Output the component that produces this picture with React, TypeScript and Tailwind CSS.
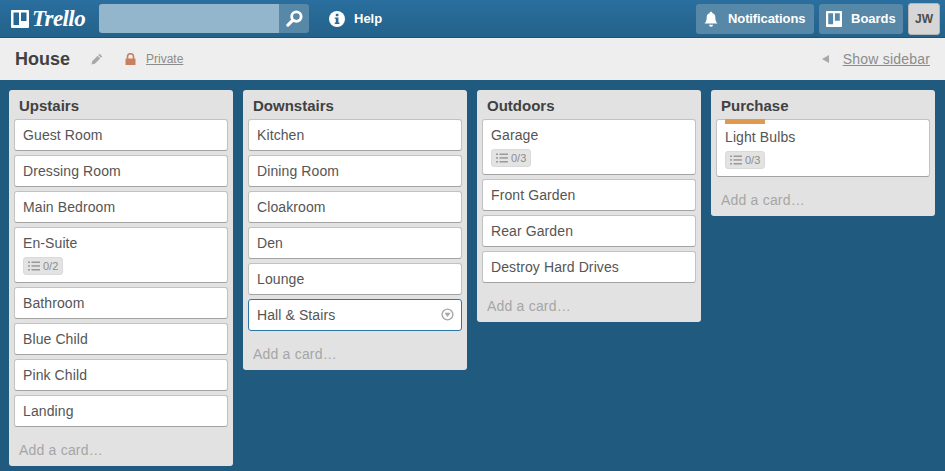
interface CardData {
  title: string;
  checklist?: string;
  label?: boolean;
  active?: boolean;
}

interface ListData {
  name: string;
  cards: CardData[];
}

const lists: ListData[] = [
  {
    name: 'Upstairs',
    cards: [
      { title: 'Guest Room' },
      { title: 'Dressing Room' },
      { title: 'Main Bedroom' },
      { title: 'En-Suite', checklist: '0/2' },
      { title: 'Bathroom' },
      { title: 'Blue Child' },
      { title: 'Pink Child' },
      { title: 'Landing' },
    ],
  },
  {
    name: 'Downstairs',
    cards: [
      { title: 'Kitchen' },
      { title: 'Dining Room' },
      { title: 'Cloakroom' },
      { title: 'Den' },
      { title: 'Lounge' },
      { title: 'Hall & Stairs', active: true },
    ],
  },
  {
    name: 'Outdoors',
    cards: [
      { title: 'Garage', checklist: '0/3' },
      { title: 'Front Garden' },
      { title: 'Rear Garden' },
      { title: 'Destroy Hard Drives' },
    ],
  },
  {
    name: 'Purchase',
    cards: [{ title: 'Light Bulbs', checklist: '0/3', label: true }],
  },
];

function BoardIcon({ className }: { className: string }) {
  return (
    <svg viewBox="0 0 18 18" className={className} fill="currentColor">
      <path
        fillRule="evenodd"
        d="M1 0h16a1 1 0 0 1 1 1v16a1 1 0 0 1-1 1H1a1 1 0 0 1-1-1V1a1 1 0 0 1 1-1zM2.500 2.500v12.500h5.500V2.500zM10 2.500v8.500h5.500V2.500z"
      />
    </svg>
  );
}

function SearchIcon() {
  return (
    <svg viewBox="0 0 18 18" className="w-[17px] h-[17px]" fill="none" stroke="white">
      <circle cx="11" cy="7" r="5" strokeWidth="3" />
      <path d="M7 11l-5 5" strokeWidth="3.4" strokeLinecap="round" />
    </svg>
  );
}

function InfoIcon() {
  return (
    <svg viewBox="0 0 16 16" className="w-[16px] h-[16px]">
      <circle cx="8" cy="8" r="8" fill="white" />
      <rect x="6.800" y="2.800" width="2.600" height="2.400" fill="#2a6a96" />
      <path d="M5.800 6.400h3.600v5.200h1v1.400H5.800v-1.400h1V7.800h-1z" fill="#2a6a96" />
    </svg>
  );
}

function BellIcon() {
  return (
    <svg viewBox="0 0 16 16" className="w-4 h-4" fill="white">
      <path d="M8 0.800c.8 0 1.300.5 1.300 1.200 2 .6 3 2.200 3 4.400 0 3 .8 4.600 2.200 6H1.500c1.400-1.400 2.200-3 2.200-6 0-2.200 1-3.800 3-4.400C6.700 1.300 7.200.8 8 .8z" />
      <path d="M6 13.700h4a2 2 0 0 1-4 0z" />
    </svg>
  );
}

function PencilIcon() {
  return (
    <svg viewBox="0 0 12 12" className="w-3 h-3" fill="#a8a8a8">
      <path d="M8.600.8l2.600 2.600-1.300 1.300-2.600-2.600zM6.600 2.800l2.600 2.600-5.400 5.400L.6 11.400l.6-3.200z" />
    </svg>
  );
}

function LockIcon() {
  return (
    <svg viewBox="0 0 11 12" className="w-[11px] h-[12px]">
      <path d="M2.500 6V3.700a3 3 0 0 1 6 0V6" fill="none" stroke="#c9805f" strokeWidth="1.600" />
      <rect x="0.500" y="5.500" width="10" height="6.500" rx="0.500" fill="#c9805f" />
    </svg>
  );
}

function ChecklistIcon() {
  return (
    <svg viewBox="0 0 12 10" className="w-3 h-2.5 text-[#9a9a9a]" fill="currentColor">
      <rect x="0" y="0.500" width="2" height="1.500" />
      <rect x="3.500" y="0.500" width="8.500" height="1.500" />
      <rect x="0" y="4.200" width="2" height="1.500" />
      <rect x="3.500" y="4.200" width="8.500" height="1.500" />
      <rect x="0" y="8" width="2" height="1.500" />
      <rect x="3.500" y="8" width="8.500" height="1.500" />
    </svg>
  );
}

function Card({ card }: { card: CardData }) {
  return (
    <div
      className={`relative bg-white rounded-[3px] border px-2 pt-[6px] pb-[5px] ${
        card.active ? 'border-[#2a77a8]' : 'border-[#c2c2c2] border-b-[#a3a3a3]'
      }`}
    >
      {card.label && <div className="absolute left-2 top-[-1px] w-10 h-[5px] bg-[#e09a4f]" />}
      <div className={`text-sm leading-[19px] tracking-[0.1px] text-[#555555] ${card.label ? 'pt-[2px]' : ''}`}>
        {card.title}
      </div>
      {card.checklist && (
        <div className="mt-1 mb-[2px] flex items-center gap-[3px] w-10 h-[18px] pl-[4px] rounded-[3px] bg-[#e3e3e3] border border-[#dadada] text-[11px] text-[#8c8c8c]">
          <ChecklistIcon />
          <span>{card.checklist}</span>
        </div>
      )}
      {card.active && (
        <svg viewBox="0 0 14 14" className="absolute right-[7px] top-[8px] w-[13px] h-[13px] text-[#a8a8a8]">
          <circle cx="7" cy="7" r="5.800" fill="none" stroke="currentColor" strokeWidth="1.500" />
          <path d="M3.800 5.200h6.400L7 9.600z" fill="currentColor" />
        </svg>
      )}
    </div>
  );
}

function List({ list }: { list: ListData }) {
  return (
    <div className="w-[224px] shrink-0 self-start bg-[#e2e2e2] rounded-[3px] px-[5px]">
      <h2 className="h-[29px] pl-[5px] pt-[6px] text-[15px] leading-[19px] font-bold text-[#414141]">{list.name}</h2>
      <div className="flex flex-col gap-1">
        {list.cards.map((card) => (
          <Card key={card.title} card={card} />
        ))}
      </div>
      <div className="h-[39px] pl-[5px] pt-[14px] text-sm leading-[19px] tracking-[0.2px] text-[#a6a6a6]">Add a card…</div>
    </div>
  );
}

export default function App() {
  return (
    <div className="w-[945px] h-[471px] overflow-hidden flex flex-col bg-[#205b7f] font-['Liberation_Sans',Arial,sans-serif]">
      <header className="h-[38px] shrink-0 flex items-center bg-gradient-to-b from-[#2a6f9f] to-[#23628a] border-b border-[#1d5273] text-white">
        <div className="w-[99px] pl-[11px] flex items-center gap-[3px]">
          <BoardIcon className="w-[18px] h-[18px]" />
          <span className="font-['Liberation_Serif',serif] italic font-bold text-[23px] leading-none tracking-[-0.6px]">
            Trello
          </span>
        </div>
        <div className="flex h-[29px] w-[210px] rounded-[3px] overflow-hidden">
          <div className="w-[180px] bg-[#93b6cc]" />
          <div className="w-[30px] bg-[#5788a8] flex items-center justify-center">
            <SearchIcon />
          </div>
        </div>
        <div className="ml-5">
          <InfoIcon />
        </div>
        <span className="ml-[9px] text-[13px] font-bold">Help</span>
        <div className="ml-auto flex items-center gap-[5px] pr-[5px]">
          <button className="h-[30px] w-[118px] flex items-center pl-[7px] gap-[9px] rounded-[3px] bg-[#5788a8] text-[13px] font-bold tracking-[-0.1px]">
            <BellIcon />
            Notifications
          </button>
          <button className="h-[30px] w-[84px] flex items-center pl-[7px] gap-[9px] rounded-[3px] bg-[#5788a8] text-[13px] font-bold">
            <BoardIcon className="w-4 h-4" />
            Boards
          </button>
          <div className="w-8 h-8 flex items-center justify-center rounded-[3px] bg-[#d6d6d6] border border-[#b5b5b5] text-[#4d4d4d] text-[12px] font-bold">
            JW
          </div>
        </div>
      </header>

      <div className="h-[42px] shrink-0 flex items-center bg-[#eeeeee] px-[15px]">
        <h1 className="text-[18px] font-bold text-[#414141]">House</h1>
        <div className="ml-[21px]">
          <PencilIcon />
        </div>
        <div className="ml-[22px]">
          <LockIcon />
        </div>
        <span className="ml-[10px] text-[12px] underline text-[#8c8c8c]">Private</span>
        <div className="ml-auto flex items-center">
          <div className="w-0 h-0 border-y-[4px] border-y-transparent border-r-[7px] border-r-[#a8a8a8]" />
          <span className="ml-[14px] text-sm tracking-[0.2px] underline text-[#8c8c8c]">Show sidebar</span>
        </div>
      </div>

      <main className="flex-1 min-h-0 flex gap-[10px] pl-[9px] pt-[10px]">
        {lists.map((list) => (
          <List key={list.name} list={list} />
        ))}
      </main>
    </div>
  );
}
